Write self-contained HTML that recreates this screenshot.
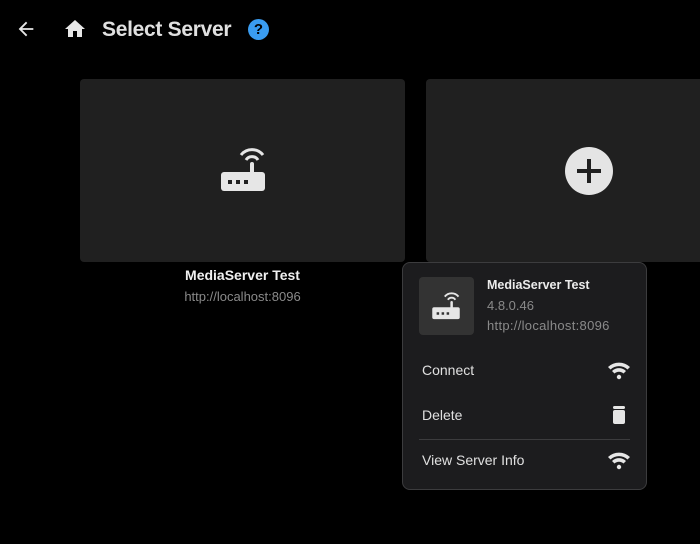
<!DOCTYPE html>
<html><head><style>
*{margin:0;padding:0;box-sizing:border-box}
body{width:700px;height:544px;background:#000;font-family:"Liberation Sans",sans-serif;position:relative;overflow:hidden;color:#e8e8e8}
.a{position:absolute}
.t{font-size:14px;color:#e0e0e0}
</style></head><body>
<svg class="a" style="left:15px;top:18px" width="22" height="22" viewBox="0 0 24 24"><path d="M20 11H7.83l5.59-5.59L12 4l-8 8 8 8 1.41-1.41L7.83 13H20v-2z" fill="#e6e6e6"/></svg>
<svg class="a" style="left:63px;top:17px" width="24" height="24" viewBox="0 0 24 24"><path d="M10 20v-6h4v6h5v-8h3L12 3 2 12h3v8z" fill="#e6e6e6"/></svg>
<div class="a" style="left:102px;top:18px;font-size:21px;font-weight:bold;color:#e0e0e0;letter-spacing:-0.3px">Select Server</div>
<div class="a" style="left:248px;top:19px;width:21px;height:21px;border-radius:50%;background:#3a9cf0;color:#000;font-weight:bold;font-size:15px;text-align:center;line-height:21px">?</div>

<div class="a" style="left:80px;top:79px;width:325px;height:183px;background:#202020;border-radius:4px"></div>
<svg class="a" style="left:219px;top:146px" width="48" height="48" viewBox="0 0 48 48">
<rect x="2" y="26" width="44" height="19" rx="3" fill="#e6e6e6"/>
<rect x="31" y="16" width="4" height="12" rx="2" fill="#e6e6e6"/>
<path d="M22 9 A14 14 0 0 1 44 9" stroke="#e6e6e6" stroke-width="3" fill="none"/>
<path d="M27 14 A7 7 0 0 1 39 14" stroke="#e6e6e6" stroke-width="3" fill="none"/>
<rect x="9" y="34" width="4" height="4" fill="#202020"/><rect x="17" y="34" width="4" height="4" fill="#202020"/><rect x="25" y="34" width="4" height="4" fill="#202020"/>
</svg>
<div class="a" style="left:80px;top:267px;width:325px;text-align:center;font-size:14px;font-weight:bold;color:#f0f0f0">MediaServer Test</div>
<div class="a" style="left:80px;top:289px;width:325px;text-align:center;font-size:13px;color:#8a8a8a">http://localhost:8096</div>

<div class="a" style="left:426px;top:79px;width:300px;height:183px;background:#202020;border-radius:4px"></div>
<div class="a" style="left:565px;top:147px;width:48px;height:48px;border-radius:50%;background:#e4e4e4"></div>
<div class="a" style="left:577px;top:169px;width:24px;height:4px;background:#202020"></div>
<div class="a" style="left:587px;top:159px;width:4px;height:24px;background:#202020"></div>

<div class="a" style="left:402px;top:262px;width:245px;height:228px;background:#1c1c1e;border:1px solid #3c3c3e;border-radius:8px"></div>
<div class="a" style="left:419px;top:277px;width:55px;height:58px;background:#333;border-radius:4px"></div>
<svg class="a" style="left:431px;top:291px" width="30" height="30" viewBox="0 0 48 48">
<rect x="2" y="26" width="44" height="19" rx="3" fill="#e6e6e6"/>
<rect x="31" y="16" width="4" height="12" rx="2" fill="#e6e6e6"/>
<path d="M22 9 A14 14 0 0 1 44 9" stroke="#e6e6e6" stroke-width="3" fill="none"/>
<path d="M27 14 A7 7 0 0 1 39 14" stroke="#e6e6e6" stroke-width="3" fill="none"/>
<rect x="9" y="34" width="4" height="4" fill="#333"/><rect x="17" y="34" width="4" height="4" fill="#333"/><rect x="25" y="34" width="4" height="4" fill="#333"/>
</svg>
<div class="a" style="left:487px;top:278px;font-size:12.5px;font-weight:bold;color:#ececec">MediaServer Test</div>
<div class="a" style="left:487px;top:298px;font-size:13px;color:#8a8a8a">4.8.0.46</div>
<div class="a" style="left:487px;top:318px;font-size:13px;color:#8a8a8a;letter-spacing:0.3px">http://localhost:8096</div>

<div class="a t" style="left:422px;top:362px">Connect</div>
<div class="a t" style="left:422px;top:407px">Delete</div>
<div class="a" style="left:419px;top:439px;width:211px;height:1px;background:#3c3c3e"></div>
<div class="a t" style="left:422px;top:452px">View Server Info</div>

<svg class="a" style="left:607px;top:360px" width="24" height="22" viewBox="0 0 24 22"><path d="M1 7 A16 16 0 0 1 23 7 L20.5 9.5 A12.5 12.5 0 0 0 3.5 9.5Z M5 11 A10 10 0 0 1 19 11 L16.5 13.5 A6.5 6.5 0 0 0 7.5 13.5Z" fill="#e6e6e6"/><circle cx="12" cy="17" r="2.2" fill="#e6e6e6"/></svg>
<svg class="a" style="left:607px;top:450px" width="24" height="22" viewBox="0 0 24 22"><path d="M1 7 A16 16 0 0 1 23 7 L20.5 9.5 A12.5 12.5 0 0 0 3.5 9.5Z M5 11 A10 10 0 0 1 19 11 L16.5 13.5 A6.5 6.5 0 0 0 7.5 13.5Z" fill="#e6e6e6"/><circle cx="12" cy="17" r="2.2" fill="#e6e6e6"/></svg>
<svg class="a" style="left:611px;top:405px" width="16" height="20" viewBox="0 0 16 20"><rect x="2" y="1" width="12" height="3" rx="1.5" fill="#e6e6e6"/><rect x="2" y="5" width="12" height="14" rx="2" fill="#e6e6e6"/></svg>
</body></html>
